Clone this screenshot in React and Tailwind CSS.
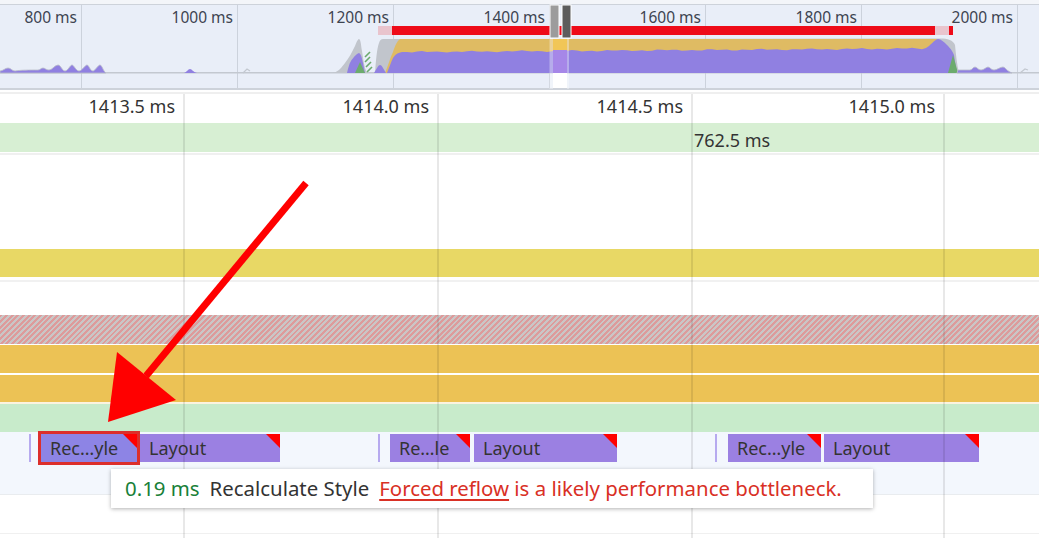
import React from "react";

const overviewLabels = ["1000 ms", "1200 ms", "1400 ms", "1600 ms", "1800 ms", "2000 ms"];

const blocks = [
    { tick: true, cls: "ml-[29px]" },
    { label: "Rec…yle", cls: "ml-[10px] w-[96px]", selected: true },
    { label: "Layout", cls: "ml-[3px] w-[140px]" },
    { tick: true, cls: "ml-[98px]" },
    { label: "Re…le", cls: "ml-[10px] w-[80px]" },
    { label: "Layout", cls: "ml-[4px] w-[143px]" },
    { tick: true, cls: "ml-[98px]" },
    { label: "Rec…yle", cls: "ml-[11px] w-[93px]" },
    { label: "Layout", cls: "ml-[3px] w-[155px]" },
];

// wavy top of the purple area in the overview
function purpleTop() {
    const pts = [];
    for (let x = 402; x <= 925; x += 5) {
        const base = 52 - ((x - 402) / 523) * 3.5;
        const y = base + Math.sin(x * 0.37) * 0.5 + Math.sin(x * 0.13) * 0.4;
        pts.push(`L${x},${y.toFixed(1)}`);
    }
    return pts.join(" ");
}

function OverviewChart() {
    const purple = "#9080e1";
    return (
        <svg
            className="absolute left-0 top-0 pointer-events-none"
            width="1039"
            height="90"
            viewBox="0 0 1039 90"
        >
            <rect x="0" y="72" width="1039" height="1.5" fill="#c3c8d0" />
            {/* left bumps */}
            <path
                d="M0,73 L0,71 C3,71 5,68 8,68 C11,68 12,71 15,71 C20,70 30,70 38,70 C40,70 41,68 43,68 C45,68 46,70 49,70 C52,70 55,65 58,65 C61,65 62,71 65,71 C68,71 70,65 72,65 C74,65 76,71 79,71 C82,71 85,65 87,65 C89,65 90,71 93,71 C95,71 98,65 100,65 C102,65 103,71 106,73 Z"
                fill={purple}
                stroke="#b9bcc8"
                strokeWidth="0.8"
            />
            <path d="M184,73 C187,72 188,69 190,69 C192,69 193,72 197,73 Z" fill={purple} />
            <path d="M243,73 L247,69 L250,71" stroke="#c3c8d0" strokeWidth="1.2" fill="none" />
            {/* first spike */}
            <path
                d="M333,73 C338,72 342,67 345,63 C349,58 352,52 355,46 C357,41 358,39 359,39 C361,40 361,46 362,51 C363,58 364,64 365,68 L367,73 Z"
                fill="#c1c5cc"
            />
            <path
                d="M347,73 C348,69 349,64 351,61 C353,58 356,54 359,53 C361,54 362,58 363,63 L365,73 Z"
                fill={purple}
            />
            <path d="M355,73 L360,62 L365,73 Z" fill="#6cab6d" />
            <g stroke="#6cab6d" strokeWidth="1.6">
                <line x1="365" y1="57" x2="370" y2="52" />
                <line x1="365" y1="62" x2="370" y2="57" />
                <line x1="366" y1="67" x2="371" y2="62" />
                <line x1="367" y1="72" x2="372" y2="67" />
            </g>
            {/* main block */}
            <path
                d="M375,73 C376,60 377,48 379,43 C380,40 381,39 383,39 L940,38.5 C948,38.5 953,40 955,45 C956,55 957,65 959,73 Z"
                fill="#c1c5cc"
            />
            <path
                d="M385,73 C388,66 390,58 393,52 C395,46 397,41 400,39 L935,39 C938,39 940,40 942,42 L942,73 Z"
                fill="#dfbb63"
            />
            <path d="M374,73 C376,70 378,65 380,65 C382,65 384,70 386,73 Z" fill={purple} />
            <path
                d={`M387,73 C389,68 391,62 393,58 C395,55 397,53 402,52 ${purpleTop()} L926,48 C930,46 934,40 938,39 C941,39 944,42 947,45 C950,48 952,50 954,55 C955,62 956,68 957,73 Z`}
                fill={purple}
            />
            <path d="M948,73 L953,55 L958,73 Z" fill="#6cab6d" />
            <path
                d="M957,73 L958,70 C962,70 966,70 970,70 C972,70 973,67 975,67 C977,67 978,70 981,70 C984,70 986,67 988,67 C990,67 991,70 994,70 C997,70 1000,67 1003,67 C1005,67 1006,70 1010,72 L1012,73 Z"
                fill={purple}
                stroke="#b9bcc8"
                strokeWidth="0.8"
            />
            <path d="M1020,73 L1025,69 L1028,70" stroke="#c3c8d0" strokeWidth="1.2" fill="none" />
            {/* selected window */}
            <rect x="549.5" y="38" width="3.5" height="51" fill="#ffffff" opacity="0.35" />
            <rect x="567" y="38" width="2" height="51" fill="#ffffff" opacity="0.35" />
            <rect x="553" y="39" width="14" height="11" fill="#f1c657" />
            <rect x="553" y="50" width="14" height="23" fill="#a687e8" />
            <rect x="553" y="73" width="14" height="15" fill="#ffffff" />
            {/* red bar */}
            <rect x="378" y="26" width="14" height="9" fill="#e9c4cd" />
            <rect x="392" y="26" width="543" height="9" fill="#ee0b19" />
            <rect x="935" y="26" width="14" height="9" fill="#e9c4cd" />
            <rect x="949" y="26" width="4" height="9" fill="#ee0b19" />
            {/* handles */}
            <rect x="550" y="5" width="9" height="33" fill="#9c9c9c" stroke="#ffffff" strokeWidth="1" />
            <rect x="562" y="5" width="9" height="33" fill="#5c5c5c" stroke="#ffffff" strokeWidth="1" />
        </svg>
    );
}

function Overview() {
    return (
        <div className="relative">
            <div className="h-[4px] bg-[#f3f5f9]" />
            <div className="h-[86px] bg-[#e9eef8] border-t border-b-2 border-[#cdd2da] flex text-[15.5px] leading-[20px] text-[#3d4451]">
                <div className="w-[82px] shrink-0 border-r border-[#ccd2dc] text-right pr-[4px] pt-[2px]">
                    800 ms
                </div>
                {overviewLabels.map((l) => (
                    <div
                        key={l}
                        className="w-[156px] shrink-0 border-r border-[#ccd2dc] text-right pr-[4px] pt-[2px]"
                    >
                        {l}
                    </div>
                ))}
                <div className="flex-1" />
            </div>
            <OverviewChart />
        </div>
    );
}

function Block({ b }) {
    if (b.tick) {
        return <div className={`${b.cls} w-[2px] h-[28px] shrink-0 bg-[#b6aaef]`} />;
    }
    return (
        <div
            className={`${b.cls} relative h-[28px] shrink-0 flex items-center pl-[9px] text-[18px] text-[#333] whitespace-nowrap overflow-hidden ${
                b.selected ? "bg-[#8d84e5] ring-3 ring-[#dc2f2b]" : "bg-[#9b80e2]"
            }`}
        >
            {b.label}
            <div className="absolute top-0 right-0 w-0 h-0 border-t-[14px] border-l-[14px] border-t-[#ff0000] border-l-transparent" />
        </div>
    );
}

export default function App() {
    return (
        <div className="relative w-[1039px] h-[538px] overflow-hidden bg-white font-['Noto_Sans',sans-serif]">
            <Overview />
            <div className="h-[2px] bg-white" />
            <div className="h-[2px] bg-[#efefef]" />

            <div className="relative">
                {/* ruler */}
                <div className="flex h-[29px] text-[18px] leading-[24px] text-[#333]">
                    <div className="w-[183px] shrink-0 text-right pr-[8px]">1413.5 ms</div>
                    <div className="w-[254px] shrink-0 text-right pr-[8px]">1414.0 ms</div>
                    <div className="w-[254px] shrink-0 text-right pr-[8px]">1414.5 ms</div>
                    <div className="w-[252px] shrink-0 text-right pr-[8px]">1415.0 ms</div>
                </div>

                <div className="h-[29px] bg-[#d7efd3] pl-[694px] pt-[5px] text-[18px] leading-[24px] text-[#333]">
                    762.5 ms
                </div>
                <div className="h-[1px] bg-white" />
                <div className="h-[2px] bg-[#f0f0f0]" />
                <div className="h-[94px] bg-white" />
                <div className="h-[28px] bg-[#e8d865]" />
                <div className="h-[3px] bg-white" />
                <div className="h-[2px] bg-[#f1f1f1]" />
                <div className="h-[33px] bg-white" />
                <div className="h-[29px] bg-[image:repeating-linear-gradient(135deg,#dd9b9b_0px,#dd9b9b_2px,#cac6c6_2px,#cac6c6_4px)]" />
                <div className="h-[1px] bg-white" />
                <div className="h-[28px] bg-[#ecc255]" />
                <div className="h-[2px] bg-white" />
                <div className="h-[27px] bg-[#ecc255]" />
                <div className="h-[2px] bg-[#fbf3e0]" />
                <div className="h-[28px] bg-[#c8ebcb]" />

                {/* flame row */}
                <div className="h-[62px] bg-[#f3f7fd] pt-[2px]">
                    <div className="flex">
                        {blocks.map((b, i) => (
                            <Block key={i} b={b} />
                        ))}
                    </div>
                </div>
                <div className="h-[1px] bg-[#e9ecef]" />
                <div className="h-[38px] bg-white" />
                <div className="h-[1px] bg-[#f0f0f0]" />
                <div className="h-[10px] bg-white" />

                {/* time grid lines */}
                <div className="absolute inset-0 flex pointer-events-none">
                    <div className="w-[183px] shrink-0" />
                    <div className="w-[2px] shrink-0 bg-black/[0.09]" />
                    <div className="w-[252px] shrink-0" />
                    <div className="w-[2px] shrink-0 bg-black/[0.09]" />
                    <div className="w-[252px] shrink-0" />
                    <div className="w-[2px] shrink-0 bg-black/[0.09]" />
                    <div className="w-[250px] shrink-0" />
                    <div className="w-[2px] shrink-0 bg-black/[0.09]" />
                </div>
            </div>

            {/* tooltip */}
            <div className="absolute left-[111px] top-[469px] w-[762px] h-[39px] bg-white shadow-[0_1px_4px_rgba(0,0,0,0.3)] flex items-center pl-[14px] gap-[10px] text-[20.4px] whitespace-nowrap">
                <span className="text-[#188038]">0.19 ms</span>
                <span className="text-[#333]">Recalculate Style</span>
                <span className="text-[#d93025]">
                    <span className="underline underline-offset-[3px]">Forced reflow</span> is a likely
                    performance bottleneck.
                </span>
            </div>

            {/* annotation arrow */}
            <svg
                className="absolute left-0 top-0 pointer-events-none"
                width="1039"
                height="538"
                viewBox="0 0 1039 538"
            >
                <line x1="306" y1="183" x2="146" y2="376" stroke="#ff0000" strokeWidth="7" />
                <polygon points="108,422 117,352 176,400" fill="#ff0000" />
            </svg>
        </div>
    );
}
